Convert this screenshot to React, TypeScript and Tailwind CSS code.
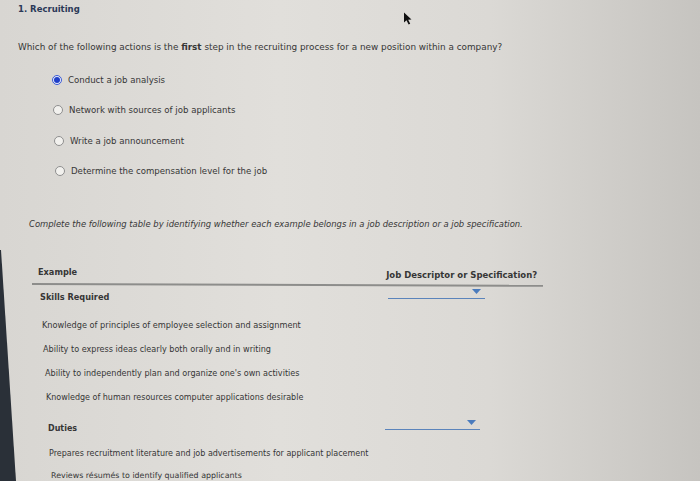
import React from "react";

const Radio = ({ checked }: { checked?: boolean }) =>
  checked ? (
    <span className="inline-flex h-[10px] w-[10px] items-center justify-center rounded-full border border-[#3b5bd6] bg-[#e8ecf8]">
      <span className="h-[6px] w-[6px] rounded-full bg-[#1f3fc8]" />
    </span>
  ) : (
    <span className="inline-block h-[10px] w-[10px] rounded-full border border-[#8f8f8f] bg-[#f2f1ee]" />
  );

const Dropdown = ({ w }: { w: string }) => (
  <div className={`relative mb-[7px] h-[10px] border-b-[1.5px] border-[#5b84bb] ${w}`}>
    <svg className="absolute right-[4px] top-[0px]" width="9" height="5" viewBox="0 0 9 5">
      <path d="M0 0 H9 L4.5 5 Z" fill="#4a7bbd" />
    </svg>
  </div>
);

export default function App() {
  const font = { fontFamily: '"DejaVu Sans", Verdana, sans-serif' };
  return (
    <div
      className="relative h-[481px] w-[700px] overflow-hidden bg-[linear-gradient(90deg,#d8d6d2_0%,#e1dfdb_40%,#dbd9d5_70%,#c6c4c0_100%)] text-[#363636]"
      style={font}
    >
      {/* dark screen edge (photo) */}
      <div className="absolute left-0 top-0 h-full w-[18px] bg-[#2a3038] [clip-path:polygon(0_250px,1px_250px,16px_481px,0_481px)]" />
      {/* cursor */}
      <svg className="absolute left-[403px] top-[12px]" width="10" height="13" viewBox="0 0 10 13">
        <path d="M1 0.5 L1 10.5 L3.5 8.3 L5.6 12.5 L7.2 11.8 L5.2 7.7 L8.5 7.5 Z" fill="#111" />
      </svg>

      <div className="pt-[2px]">
        <div className="flex h-[14px] items-center pl-[18px] text-[8.5px] font-bold text-[#2b3958]">
          1. Recruiting
        </div>
        <div className="mt-[25px] flex h-[14px] items-center pl-[18px] text-[8.85px]">
          Which of the following actions is the&nbsp;<b>first</b>&nbsp;step in the recruiting process for a new position within a company?
        </div>

        <div className="mt-[18px] flex h-[14px] items-center gap-[6px] pl-[52px] text-[8.6px]">
          <Radio checked />
          <span>Conduct a job analysis</span>
        </div>
        <div className="mt-[16px] flex h-[14px] items-center gap-[6px] pl-[53px] text-[8.6px]">
          <Radio />
          <span>Network with sources of job applicants</span>
        </div>
        <div className="mt-[17px] flex h-[14px] items-center gap-[6px] pl-[54px] text-[8.6px]">
          <Radio />
          <span>Write a job announcement</span>
        </div>
        <div className="mt-[16px] flex h-[14px] items-center gap-[6px] pl-[55px] text-[8.6px]">
          <Radio />
          <span>Determine the compensation level for the job</span>
        </div>

        <div className="mt-[39px] flex h-[14px] items-center pl-[29px] text-[8.43px] italic">
          Complete the following table by identifying whether each example belongs in a job description or a job specification.
        </div>

        {/* table */}
        <div className="ml-[32px] w-[511px]">
          <div className="mt-[34px] flex h-[14px] items-center text-[8.2px] font-bold">
            <span className="pl-[6px]">Example</span>
            <span className="ml-[309px] pt-[7px] text-[8.5px]">Job Descriptor or Specification?</span>
          </div>
          <div className="mt-[4px] h-[1.5px] origin-left rotate-[0.2deg] bg-[#8d8d8b]" />
        </div>

        <div className="mt-[6px] flex h-[14px] items-center text-[8.2px] font-bold">
          <span className="w-[388px] pl-[40px]">Skills Required</span>
          <Dropdown w="w-[97px]" />
        </div>
        <div className="mt-[14px] flex h-[14px] items-center pl-[42px] text-[8.2px]">
          Knowledge of principles of employee selection and assignment
        </div>
        <div className="mt-[10px] flex h-[14px] items-center pl-[43px] text-[8.1px]">
          Ability to express ideas clearly both orally and in writing
        </div>
        <div className="mt-[10px] flex h-[14px] items-center pl-[45px] text-[8.1px]">
          Ability to independently plan and organize one's own activities
        </div>
        <div className="mt-[10px] flex h-[14px] items-center pl-[46px] text-[8px]">
          Knowledge of human resources computer applications desirable
        </div>

        <div className="mt-[17px] flex h-[14px] items-center text-[8px] font-bold">
          <span className="w-[385px] pl-[48px]">Duties</span>
          <Dropdown w="w-[95px]" />
        </div>
        <div className="mt-[11px] flex h-[14px] items-center pl-[49px] text-[8px]">
          Prepares recruitment literature and job advertisements for applicant placement
        </div>
        <div className="mt-[8px] flex h-[14px] items-center pl-[51px] text-[7.9px]">
          Reviews résumés to identify qualified applicants
        </div>
      </div>
    </div>
  );
}
